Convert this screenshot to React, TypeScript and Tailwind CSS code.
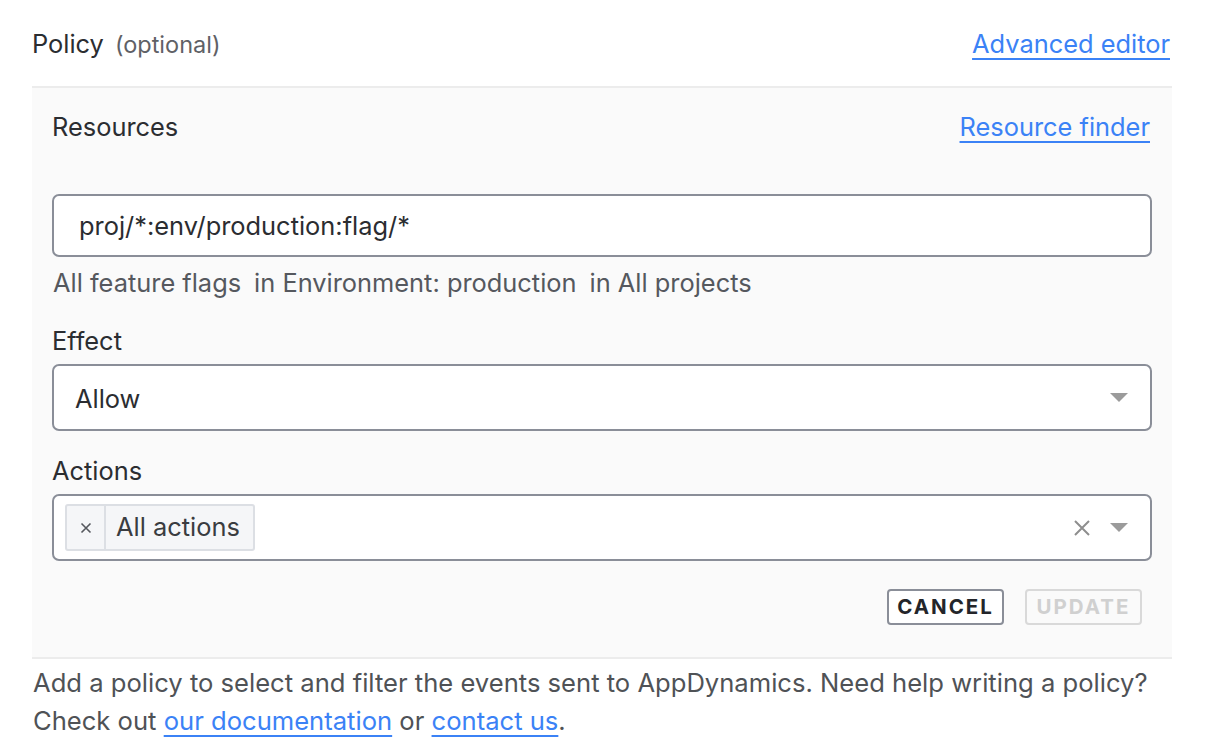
import React from "react";

const Caret = () => (
  <svg width="20" height="11" viewBox="0 0 20 11" className="shrink-0">
    <path d="M1 1 L19 1 L10 10 Z" fill="#9b9b9b" />
  </svg>
);

export default function App() {
  return (
    <div
      className="w-[1206px] h-[746px] bg-white text-[#2b2d31] overflow-hidden"
      style={{ fontFamily: "Inter, 'Noto Sans', sans-serif" }}
    >
      <div className="ml-[32px] w-[1140px]">
        <div className="h-[86px] flex items-center justify-between pt-[2px]">
          <div className="flex items-baseline">
            <span className="text-[25.4px] leading-8">Policy</span>
            <span className="text-[23.5px] leading-8 text-[#5f6166] ml-[11px]">(optional)</span>
          </div>
          <a className="text-[25.4px] leading-8 text-[#3b82f6] underline underline-offset-[5px] decoration-[2px] mr-[2px]">
            Advanced editor
          </a>
        </div>
        <div className="bg-[#fafafa] border-t-2 border-b-2 border-[#ececec] px-5 pt-[23px] pb-[32px]">
          <div className="flex justify-between items-center h-8">
            <span className="text-[25.4px] leading-8">Resources</span>
            <a className="text-[25.4px] leading-8 text-[#3b82f6] underline underline-offset-[5px] decoration-[2px] mr-[2px]">
              Resource finder
            </a>
          </div>
          <div className="mt-[51px] h-[63px] bg-white border-2 border-[#8a8e98] rounded-[7px] flex items-center pl-[25px] pt-[2px]">
            <span className="text-[25.4px]">proj/*:env/production:flag/*</span>
          </div>
          <div className="mt-[10px] text-[25.4px] leading-8 text-[#55585e] pl-[1px]">
            <span>All feature flags</span>
            <span className="ml-[13px]">in Environment: production</span>
            <span className="ml-[13px]">in All projects</span>
          </div>
          <div className="mt-[26px] text-[25.4px] leading-8">Effect</div>
          <div className="mt-[7px] h-[67px] bg-white border-2 border-[#8a8e98] rounded-[7px] flex items-center pl-[21px] pr-[21px]">
            <span className="text-[25.4px] flex-1 pt-[3px]">Allow</span>
            <Caret />
          </div>
          <div className="mt-[24px] text-[25.4px] leading-8">Actions</div>
          <div className="mt-[7px] h-[67px] bg-white border-2 border-[#8a8e98] rounded-[7px] flex items-center pl-[11px] pr-[21px]">
            <div className="flex items-stretch h-[47px] bg-[#f5f6f8] border-2 border-[#dcdfe4] rounded-[3px]">
              <div className="w-[39px] flex items-center justify-center border-r-2 border-[#dcdfe4] text-[#55585e]">
                <svg width="12" height="12" viewBox="0 0 12 12">
                  <path d="M1.5 1.5 L10.5 10.5 M10.5 1.5 L1.5 10.5" stroke="#55585e" strokeWidth="1.6" />
                </svg>
              </div>
              <div className="flex items-center pl-[10px] pr-[13px] text-[25.4px] text-[#3a3c40]">All actions</div>
            </div>
            <div className="flex-1" />
            <svg width="18" height="18" viewBox="0 0 18 18" className="mr-[18px]">
              <path d="M2 2 L16 16 M16 2 L2 16" stroke="#8e8e8e" strokeWidth="2" />
            </svg>
            <Caret />
          </div>
          <div className="mt-[28px] flex justify-end gap-[21px] pr-[10px]">
            <button className="h-[36px] w-[117px] border-2 border-[#8a8e98] rounded-[4px] bg-white text-[20.5px] font-bold tracking-[2px] text-[#23252a] flex items-center justify-center">
              CANCEL
            </button>
            <button className="h-[36px] w-[117px] border-2 border-[#d9d9d9] rounded-[4px] bg-[#fafafa] text-[20.5px] font-bold tracking-[2px] text-[#d0d0d0] flex items-center justify-center">
              UPDATE
            </button>
          </div>
        </div>
        <div className="mt-[5px] text-[25.6px] leading-[38px] text-[#4f5256] pl-[1px] whitespace-nowrap">
          <div>Add a policy to select and filter the events sent to AppDynamics. Need help writing a policy?</div>
          <div>
            Check out{" "}
            <a className="text-[#3b82f6] underline underline-offset-[5px] decoration-[2px]">our documentation</a> or{" "}
            <a className="text-[#3b82f6] underline underline-offset-[5px] decoration-[2px]">contact us</a>.
          </div>
        </div>
      </div>
    </div>
  );
}
